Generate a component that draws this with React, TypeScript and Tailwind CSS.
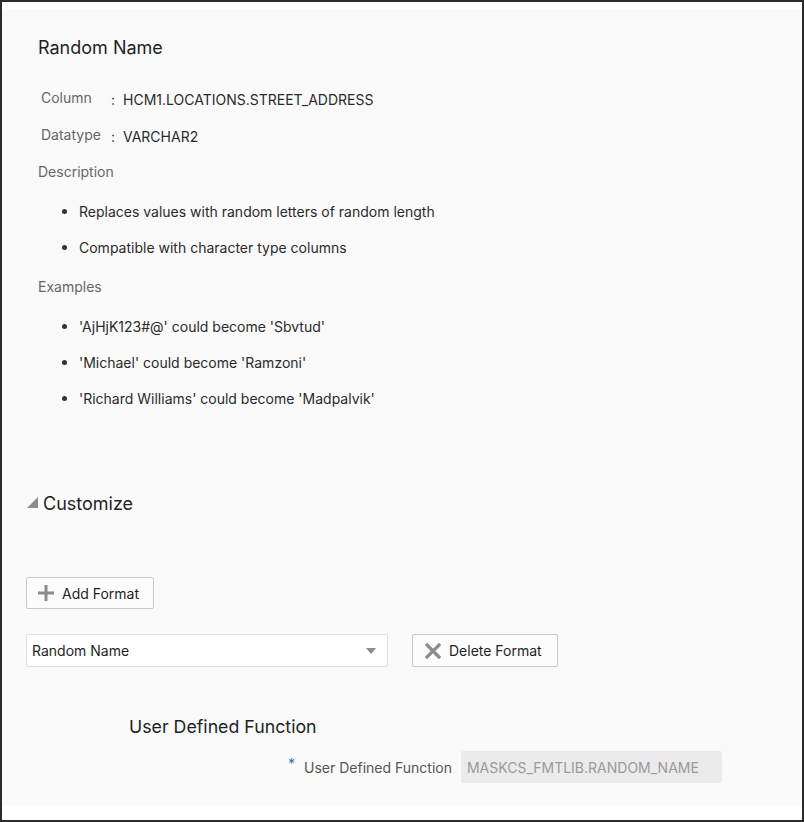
import React from "react";

const Bullet = ({ children }: { children: React.ReactNode }) => (
  <div className="flex items-center h-[20px]">
    <span className="ml-[24px] w-[5px] h-[5px] rounded-full bg-[#333333]" />
    <span className="ml-[12px] text-[14px] text-[#2a2a2a]">{children}</span>
  </div>
);

export default function App() {
  return (
    <div
      className="w-[804px] h-[822px] bg-[#2b2b2b] p-[2px]"
      style={{ fontFamily: 'Inter, "Liberation Sans", Arial, sans-serif' }}
    >
      <div className="w-full h-full bg-white flex flex-col pt-[7px] pb-[14px]">
        <div className="flex-1 bg-[#fafafa] flex flex-col pt-[26px]">
          {/* Summary section */}
          <div className="pl-[36px] flex flex-col">
            <div className="h-[24px] flex items-center text-[18px] text-[#1f1f1f]">Random Name</div>

            <div className="mt-[30px] h-[20px] flex items-center text-[14px]">
              <span className="ml-[3px] w-[70px] text-[#666666] -translate-y-[2px]">Column</span>
              <span className="w-[12px] text-[#333333]">:</span>
              <span className="text-[#2a2a2a]">HCM1.LOCATIONS.STREET_ADDRESS</span>
            </div>
            <div className="mt-[17px] h-[20px] flex items-center text-[14px]">
              <span className="ml-[3px] w-[70px] text-[#666666] -translate-y-[2px]">Datatype</span>
              <span className="w-[12px] text-[#333333]">:</span>
              <span className="text-[#2a2a2a]">VARCHAR2</span>
            </div>

            <div className="mt-[15px] h-[20px] flex items-center text-[14px] text-[#666666]">Description</div>
            <div className="mt-[20px]">
              <Bullet>Replaces values with random letters of random length</Bullet>
            </div>
            <div className="mt-[16px]">
              <Bullet>Compatible with character type columns</Bullet>
            </div>

            <div className="mt-[19px] h-[20px] flex items-center text-[14px] text-[#666666]">Examples</div>
            <div className="mt-[20px]">
              <Bullet>'AjHjK123#@' could become 'Sbvtud'</Bullet>
            </div>
            <div className="mt-[16px]">
              <Bullet>'Michael' could become 'Ramzoni'</Bullet>
            </div>
            <div className="mt-[16px]">
              <Bullet>'Richard Williams' could become 'Madpalvik'</Bullet>
            </div>
          </div>

          {/* Customize section */}
          <div className="pl-[24px] flex flex-col mt-[82px]">
            <div className="h-[24px] flex items-center">
              <svg width="11" height="11" viewBox="0 0 11 11" className="ml-[1px] mt-[1px]">
                <polygon points="11,0 11,11 0,11" fill="#8c8c8c" />
              </svg>
              <span className="ml-[5px] text-[18px] text-[#1f1f1f] translate-y-[1px]">Customize</span>
            </div>

            <div className="mt-[63px]">
              <button className="w-[128px] h-[32px] border border-[#c8c8c8] rounded-[2px] bg-[#fcfcfc] flex items-center">
                <svg width="16" height="16" viewBox="0 0 16 16" className="ml-[11px]">
                  <rect x="6.5" y="0" width="3" height="16" fill="#8c8c8c" />
                  <rect x="0" y="6.5" width="16" height="3" fill="#8c8c8c" />
                </svg>
                <span className="ml-[8px] text-[14px] text-[#1f1f1f]">Add Format</span>
              </button>
            </div>

            <div className="mt-[25px] flex items-center">
              <div className="w-[362px] h-[33px] border border-[#e0e0e0] rounded-[2px] bg-white flex items-center justify-between">
                <span className="ml-[5px] text-[14px] text-[#1f1f1f]">Random Name</span>
                <svg width="10" height="6" viewBox="0 0 10 6" className="mr-[11px]">
                  <polygon points="0,0 10,0 5,6" fill="#8c8c8c" />
                </svg>
              </div>
              <button className="ml-[24px] w-[146px] h-[33px] border border-[#c8c8c8] rounded-[2px] bg-[#fcfcfc] flex items-center">
                <svg width="16" height="16" viewBox="0 0 16 16" className="ml-[12px]">
                  <path d="M2 2 L14 14 M14 2 L2 14" stroke="#8c8c8c" strokeWidth="3.2" strokeLinecap="square" />
                </svg>
                <span className="ml-[8px] text-[14px] text-[#1f1f1f]">Delete Format</span>
              </button>
            </div>
          </div>

          {/* UDF section */}
          <div className="flex flex-col mt-[48px] pl-[127px]">
            <div className="h-[24px] flex items-center text-[17.75px] text-[#1f1f1f]">User Defined Function</div>
            <div className="mt-[12px] flex items-center h-[32px]">
              <span className="ml-[159px] text-[14px] text-[#2a72b8] -translate-y-[4px]">*</span>
              <span className="ml-[9px] text-[14px] text-[#555555]">User Defined Function</span>
              <div className="ml-[9px] w-[261px] h-[32px] bg-[#ebebeb] rounded-[2px] flex items-center">
                <span className="ml-[6px] text-[14px] text-[#9a9a9a]">MASKCS_FMTLIB.RANDOM_NAME</span>
              </div>
            </div>
          </div>
        </div>
      </div>
    </div>
  );
}
